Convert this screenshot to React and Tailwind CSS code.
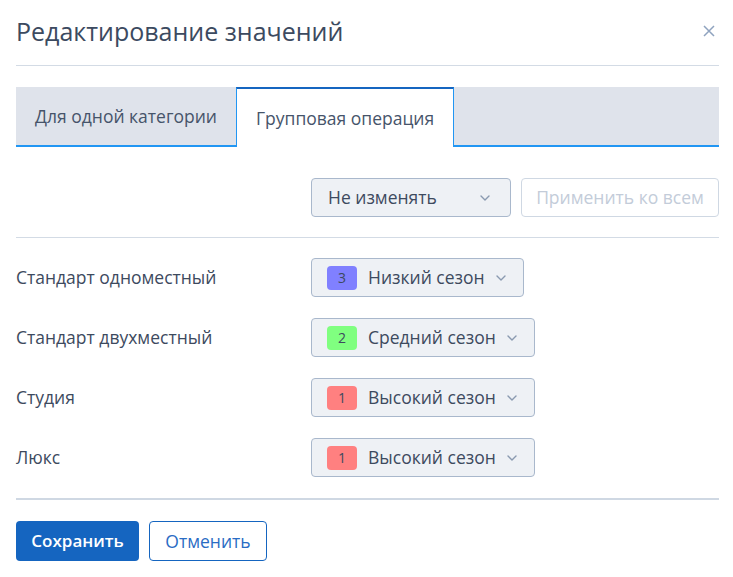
import React from 'react';

function Chevron({ className = '' }) {
    return (
        <svg className={className} width="10" height="6" viewBox="0 0 10 6" fill="none">
            <path d="M1 1l4 4 4-4" stroke="#8a9ab0" strokeWidth="1.4" strokeLinecap="round" strokeLinejoin="round" />
        </svg>
    );
}

const rows = [
    { name: 'Стандарт одноместный', num: 3, label: 'Низкий сезон', color: 'bg-[#8080ff]' },
    { name: 'Стандарт двухместный', num: 2, label: 'Средний сезон', color: 'bg-[#80ff80]' },
    { name: 'Студия', num: 1, label: 'Высокий сезон', color: 'bg-[#ff8080]' },
    { name: 'Люкс', num: 1, label: 'Высокий сезон', color: 'bg-[#ff8080]' },
];

export default function App() {
    return (
        <div className="w-[733px] h-[577px] bg-white pl-4 pr-[14px] text-[#3d4a5e]" style={{ fontFamily: '"Open Sans", "Noto Sans", sans-serif' }}>
            <div className="flex items-center justify-between h-[66px] border-b border-[#d3dbe5]">
                <h1 className="text-[25px] text-[#3c4a60] pb-[2px]">Редактирование значений</h1>
                <button className="mr-[4px] mb-[4px]">
                    <svg width="12" height="12" viewBox="0 0 12 12">
                        <path d="M1 1l10 10M11 1L1 11" stroke="#8fa3bf" strokeWidth="1.5" />
                    </svg>
                </button>
            </div>

            <div className="mt-[21px] flex h-[60px] bg-[#dfe3eb] border-b-2 border-[#2196f3]">
                <div className="flex items-center px-[19px] text-[17.5px] text-[#46546a]">Для одной категории</div>
                <div className="flex items-center px-[19px] -mb-[2px] bg-white border-t-2 border-t-[#1565c0] border-x border-x-[#2196f3] text-[17.5px] text-[#46546a]">
                    Групповая операция
                </div>
            </div>

            <div className="mt-[31px] flex justify-end gap-[10px] pb-[20px] border-b border-[#d3dbe5]">
                <button className="flex items-center justify-between w-[200px] h-[39px] pl-[16px] pr-[20px] bg-[#eef1f5] border border-[#a9b8cc] rounded-[4px] text-[17.5px] text-[#3d4a5e]">
                    Не изменять
                    <Chevron />
                </button>
                <button className="w-[198px] h-[39px] border border-[#cfd8e3] rounded-[4px] text-[17.5px] text-[#c3ccd9]">
                    Применить ко всем
                </button>
            </div>

            <div className="flex flex-col gap-[21px] pt-[20px] pb-[21px] border-b-2 border-[#cfd8e3]">
                {rows.map((r) => (
                    <div key={r.name} className="flex items-center">
                        <div className="w-[295px] text-[17.5px] text-[#3d4a5e]">{r.name}</div>
                        <button className="flex items-center h-[39px] pl-[15px] pr-[17px] bg-[#eef1f5] border border-[#a9b8cc] rounded-[4px]">
                            <span className={`flex items-center justify-center w-[30px] h-[24px] rounded-[4px] text-[14px] text-[#3d4a5e] ${r.color}`}>{r.num}</span>
                            <span className="ml-[11px] text-[17.5px] text-[#3d4a5e]">{r.label}</span>
                            <Chevron className="ml-[11px]" />
                        </button>
                    </div>
                ))}
            </div>

            <div className="mt-[21px] flex gap-[10px]">
                <button className="w-[123px] h-[40px] bg-[#1565c0] rounded-[4px] text-white text-[17px] font-semibold">Сохранить</button>
                <button className="w-[118px] h-[40px] border border-[#1565c0] rounded-[4px] text-[#2a6cc4] text-[17.5px]">Отменить</button>
            </div>
        </div>
    );
}
